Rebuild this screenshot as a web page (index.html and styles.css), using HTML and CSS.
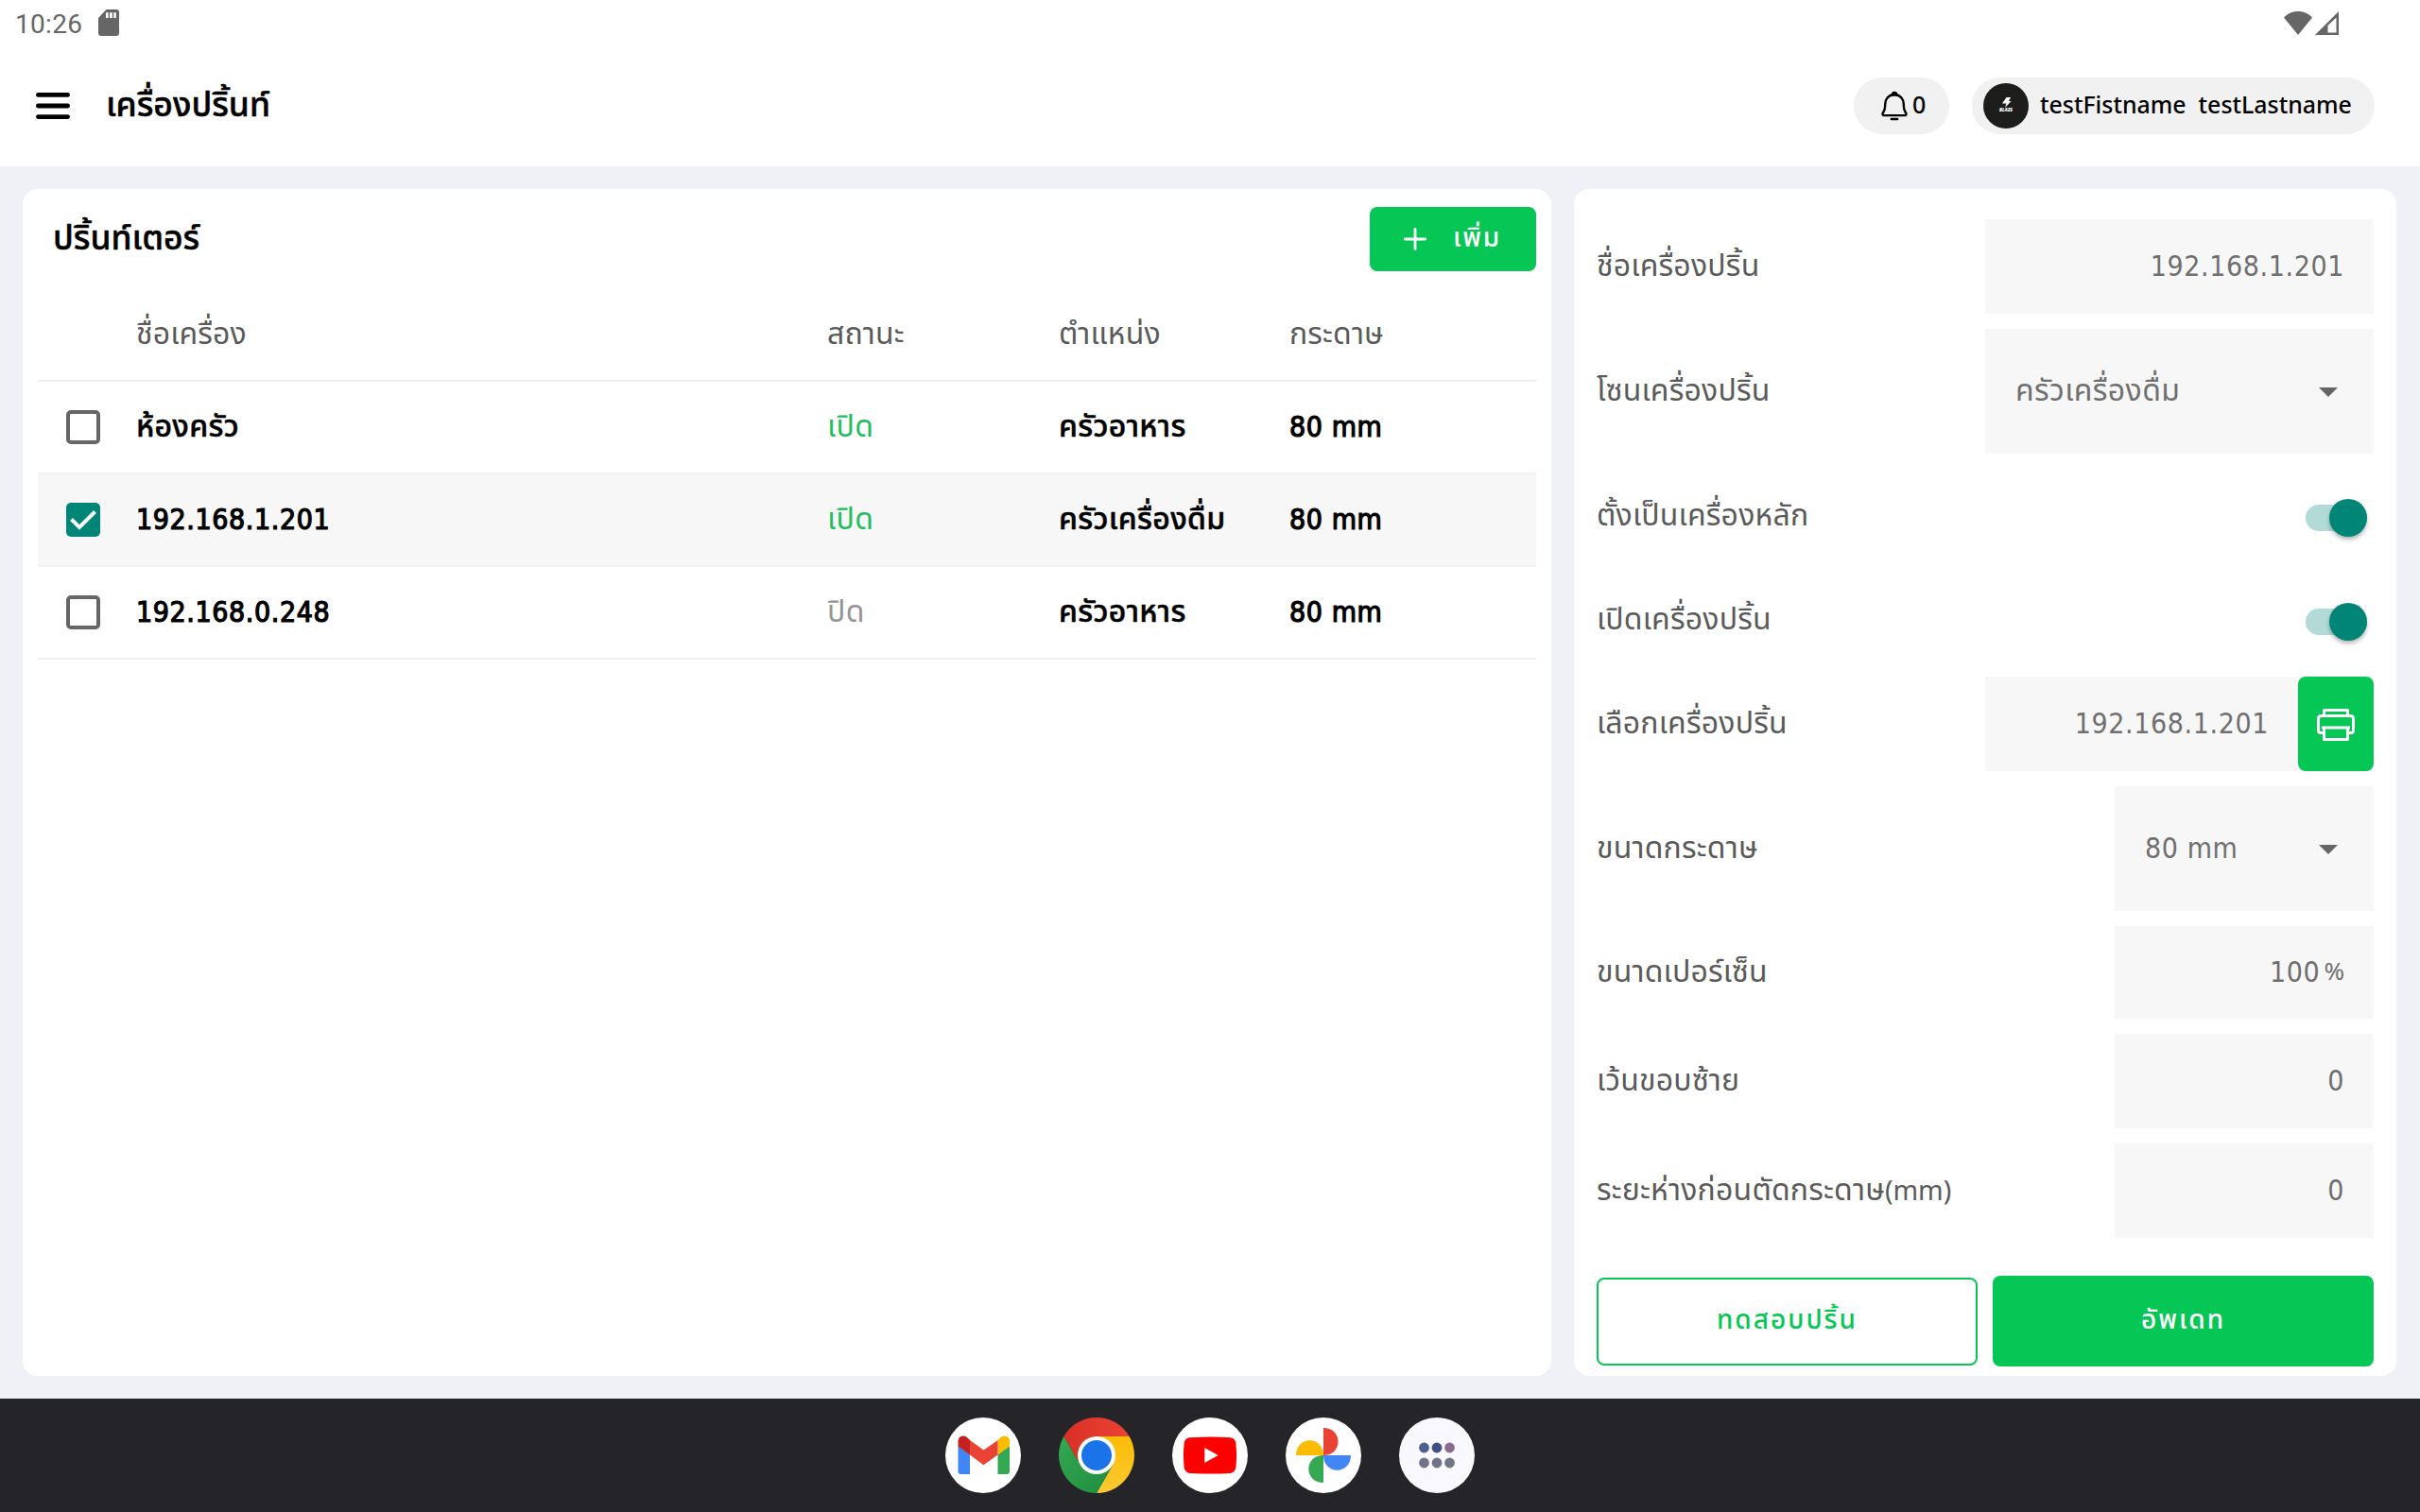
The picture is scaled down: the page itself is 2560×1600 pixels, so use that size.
FILE: index.html
```html
<!DOCTYPE html>
<html lang="th">
<head>
<meta charset="utf-8">
<title>เครื่องปริ้นท์</title>
<link rel="stylesheet" href="styles.css">
</head>
<body>
<div class="statusbar">
  <span class="clock">10:26</span>
  <svg class="sd" width="22" height="28" viewBox="0 0 22 28"><path fill="#666" fill-rule="evenodd" d="M8.5 0H19q3 0 3 3v22q0 3-3 3H3q-3 0-3-3V9zM8 3.3v5.7h2.6V3.3zM12 3.3v5.7h2.8V3.3zM16.2 3.3v5.7h2.6V3.3z"/></svg>
  <span class="spacer"></span>
  <svg width="30" height="25" viewBox="0 0 30 25"><path fill="#666" d="M0 6.5C8-2.2 22-2.2 30 6.5L15 25z"/></svg>
  <svg class="signal" width="25" height="25" viewBox="0 0 25 25"><path fill="#666" fill-rule="evenodd" d="M25 0v25H0zM22.5 6.5L13.5 15v7.5h9z"/></svg>
</div>
<header class="appbar">
  <svg class="menu" width="36" height="28" viewBox="0 0 36 28"><path stroke="#000" stroke-width="4.8" stroke-linecap="round" d="M2.4 2.4h31.2M2.4 14h31.2M2.4 25.6h31.2"/></svg>
  <h1>เครื่องปริ้นท์</h1>
  <span class="spacer"></span>
  <div class="pill bell">
    <svg width="28" height="32" viewBox="0 0 28 32" fill="none" stroke="#000" stroke-width="2.4" stroke-linecap="round" stroke-linejoin="round"><path d="M14 4.2c-6.300-.2-9.800 4.800-9.800 10 0 6.500-1.200 7.500-2.400 9.300-.7 1.600-.1 2.600 1.200 2.600h22c1.300 0 1.900-1 1.200-2.600-1.200-1.800-2.400-2.800-2.400-9.300 0-5.200-3.500-10.200-9.800-10z"/><path d="M11.700 4.300a2.300 2.300 0 0 1 4.600 0z" fill="#000"/><path d="M10.800 30h6.400"/></svg>
    <span>0</span>
  </div>
  <div class="pill user">
    <svg width="48" height="48" viewBox="0 0 48 48"><circle cx="24" cy="24" r="24" fill="#1d1d1b"/><path fill="#fff" d="M24.500 15h4.500l-2 4h2.500l-6.500 7 1.500-4.500H20z"/><text x="17" y="30" font-family="Noto Sans" font-size="4.600" font-weight="900" font-style="italic" fill="#fff" textLength="14" lengthAdjust="spacingAndGlyphs">BLAZE</text></svg>
    <span>testFistname&nbsp; testLastname</span>
  </div>
</header>
<main class="content">
  <section class="panel printers">
    <div class="panel-head">
      <h2>ปริ้นท์เตอร์</h2>
      <button class="btn add"><svg width="24" height="24" viewBox="0 0 24 24"><path stroke="#fff" stroke-width="2.800" stroke-linecap="round" d="M12 1.400v21.200M1.400 12h21.200"/></svg><span>เพิ่ม</span></button>
    </div>
    <div class="row th"><span></span><span>ชื่อเครื่อง</span><span>สถานะ</span><span>ตำแหน่ง</span><span>กระดาษ</span></div>
    <div class="row"><span class="check"></span><span>ห้องครัว</span><span class="on">เปิด</span><span>ครัวอาหาร</span><span class="num">80 mm</span></div>
    <div class="row selected"><span class="check checked"><svg width="36" height="36" viewBox="0 0 36 36"><path fill="none" stroke="#f7f7f7" stroke-width="4" d="M5.500 17.500l8.500 8.500L30.500 9.500"/></svg></span><span class="num">192.168.1.201</span><span class="on">เปิด</span><span>ครัวเครื่องดื่ม</span><span class="num">80 mm</span></div>
    <div class="row"><span class="check"></span><span class="num">192.168.0.248</span><span class="off">ปิด</span><span>ครัวอาหาร</span><span class="num">80 mm</span></div>
  </section>
  <section class="panel form">
    <div class="field"><label>ชื่อเครื่องปริ้น</label><div class="input wide">192.168.1.201</div></div>
    <div class="field"><label>โซนเครื่องปริ้น</label><div class="input select wide"><span class="thai">ครัวเครื่องดื่ม</span><i class="caret"></i></div></div>
    <div class="field toggle"><label>ตั้งเป็นเครื่องหลัก</label><div class="switch"><i></i></div></div>
    <div class="field toggle"><label>เปิดเครื่องปริ้น</label><div class="switch"><i></i></div></div>
    <div class="field"><label>เลือกเครื่องปริ้น</label><div class="combo"><div class="input">192.168.1.201</div><button class="btn print"><svg width="40" height="34" viewBox="0 0 40 34" fill="none" stroke="#fff" stroke-width="3" stroke-linejoin="round"><path d="M7.500 7.500v-6h25v6M8 25.500H4q-2.500 0-2.500-2.500V10.500q0-3 3-3h31q3 0 3 3V23q0 2.500-2.500 2.500h-4M5 20h30M7.500 20v12.500h25V20"/></svg></button></div></div>
    <div class="field"><label>ขนาดกระดาษ</label><div class="input select">80 mm<i class="caret"></i></div></div>
    <div class="field"><label>ขนาดเปอร์เซ็น</label><div class="input percent">100<span class="unit">%</span></div></div>
    <div class="field"><label>เว้นขอบซ้าย</label><div class="input">0</div></div>
    <div class="field"><label>ระยะห่างก่อนตัดกระดาษ<span class="mm">(mm)</span></label><div class="input">0</div></div>
    <div class="actions"><button class="btn outline">ทดสอบปริ้น</button><button class="btn fill">อัพเดท</button></div>
  </section>
</main>
<nav class="dock">
  <svg viewBox="0 0 80 80"><circle cx="40" cy="40" r="40" fill="#fff"/><path fill="#4285f4" d="M13.500 30v27a3 3 0 0 0 3 3H26V39z"/><path fill="#34a853" d="M68 30v27a3 3 0 0 1-3 3h-9.500V39z"/><path fill="#fbbc04" d="M55.500 24l2.500-2.500c4-4 10-1.500 10 3.500v5.500L55.500 39.500z"/><path fill="#c5221f" d="M26 24l-2.500-2.500c-4-4-10-1.500-10 3.500v5.500L26 39.500z"/><path fill="#ea4335" d="M26 24l14.500 10.500L55.500 24v15.500L40.500 50.200 26 39.500z"/></svg>
  <svg viewBox="0 0 80 80"><defs><linearGradient id="cr"><stop stop-color="#d93025"/><stop offset="1" stop-color="#ea4335"/></linearGradient><linearGradient id="cg" x1="1" y1="1" x2="0" y2="0"><stop stop-color="#1e8e3e"/><stop offset="1" stop-color="#34a853"/></linearGradient><linearGradient id="cy" x1="0" y1="1" x2="0" y2="0"><stop stop-color="#fcc934"/><stop offset="1" stop-color="#fbbc04"/></linearGradient></defs><path fill="url(#cr)" d="M5.360 20A40 40 0 0 1 74.640 20H40L22.700 50z"/><path fill="url(#cy)" d="M74.640 20A40 40 0 0 1 40 80L57.300 50 40 20z"/><path fill="url(#cg)" d="M40 80A40 40 0 0 1 5.360 20L22.700 50 57.300 50z"/><circle cx="40" cy="40" r="20" fill="#fff"/><circle cx="40" cy="40" r="16" fill="#1a73e8"/></svg>
  <svg viewBox="0 0 80 80"><circle cx="40" cy="40" r="40" fill="#fff"/><path fill="#f00" d="M18.500 21.300Q40 19.900 61.500 21.300 66.500 21.800 67.300 27 68.800 40 67.300 53 66.500 58.200 61.500 58.900 40 60.300 18.500 58.900 13.500 58.200 12.700 53 11.200 40 12.700 27 13.500 21.800 18.500 21.300z"/><path fill="#fff" d="M34.300 32v16L48.700 40z"/></svg>
  <svg viewBox="0 0 80 80"><circle cx="40" cy="40" r="40" fill="#fff"/><path fill="#ea4335" d="M40 11c9 0 15.500 6 15.500 14.500S49 40 40 40z"/><path fill="#4285f4" d="M69 40c0 9-6 15.700-14.500 15.700S40 49 40 40z"/><path fill="#34a853" d="M40 69c-9 0-15.700-6-15.700-14.500S31 40 40 40z"/><path fill="#fbbc04" d="M11 40c0-9 6-15.700 14.500-15.700S40 31 40 40z"/></svg>
  <svg viewBox="0 0 80 80"><circle cx="40" cy="40" r="40" fill="#faf8ff"/><g fill="#6f7587"><circle cx="26.500" cy="32" r="5.400" fill="#4c5f93"/><circle cx="40" cy="32" r="5.400" fill="#3f5184"/><circle cx="53.500" cy="32" r="5.400" fill="#8c6a8b"/><circle cx="26.500" cy="48" r="5.400"/><circle cx="40" cy="48" r="5.400"/><circle cx="53.500" cy="48" r="5.400"/></g></svg>
</nav>
</body>
</html>
```
FILE: styles.css
```css
* { box-sizing: border-box; }
body {
  margin: 0;
  width: 2560px;
  height: 1600px;
  display: flex;
  flex-direction: column;
  background: #f0f1f6;
  font-family: "Noto Sans Thai", "Noto Sans", sans-serif;
  font-size: 32px;
  line-height: 40px;
  color: #000;
  overflow: hidden;
}
svg { display: block; flex: none; }
h1, h2 { margin: 0; font-size: 35.5px; font-weight: 500; -webkit-text-stroke: .5px #000; padding-bottom: 1px; }
.spacer { flex: 1; }

.statusbar { height: 48px; background: #fff; display: flex; align-items: center; padding: 0 86px 0 16px; }
.clock { font-family: Roboto, sans-serif; font-size: 28px; letter-spacing: .3px; color: #666; padding-top: 4px; width: 88px; }
.signal { margin-left: 3px; }

.appbar { height: 128px; background: #fff; display: flex; align-items: center; padding: 0 48px 0 38px; }
.menu { margin-right: 38px; }
.pill { height: 60px; border-radius: 30px; background: #f1f1f1; display: flex; align-items: center; font: 500 25px/40px "Noto Sans", sans-serif; }
.bell { width: 101px; padding-left: 29px; gap: 5px; margin-right: 24px; }
.user { width: 426px; padding-left: 12px; gap: 12px; font-size: 24.900px; white-space: nowrap; }
.pill span { padding-bottom: 4px; }

.content { height: 1304px; display: flex; gap: 24px; padding: 24px 25px 24px 24px; }
.panel { background: #fff; border-radius: 16px; }
.printers { width: 1617px; padding: 19px 16px; }
.form { width: 870px; padding: 32px 24px 0 24px; display: flex; flex-direction: column; gap: 16px; }

.panel-head { display: flex; justify-content: space-between; align-items: center; height: 68px; padding-left: 16px; margin-bottom: 19px; }
.btn { border: 0; padding: 0; margin: 0; border-radius: 8px; background: #06c755; color: #fff; display: flex; align-items: center; justify-content: center; font: 500 28px/40px "Noto Sans Thai", sans-serif; letter-spacing: 2px; }
.add { width: 176px; height: 68px; gap: 28px; justify-content: flex-start; padding-left: 36px; }

.row { height: 98px; border-bottom: 2px solid #efefef; display: grid; grid-template-columns: 104px 731px 245px 244px 1fr; align-items: center; font-weight: 500; letter-spacing: .35px; }
.row.selected { background: #f7f7f7; }
.row > span { -webkit-text-stroke: .5px currentColor; }
.row.th > span { font-weight: 400; color: #5a5a5a; -webkit-text-stroke: 0; letter-spacing: .15px; }
.row > .on { color: #22bd5e; font-weight: 400; -webkit-text-stroke: 0; }
.row > .off { color: #959595; font-weight: 400; -webkit-text-stroke: 0; }
.row > .num { font-family: "DejaVu Sans Condensed", "DejaVu Sans", sans-serif; font-stretch: condensed; font-size: 30px; letter-spacing: .6px; font-weight: 400; -webkit-text-stroke: 1.200px #000; padding-bottom: 1px; }
.check { width: 36px; height: 36px; margin-left: 30px; border: 4px solid #666; border-radius: 5px; }
.check.checked { border: 0; background: #018577; }

.field { display: flex; justify-content: space-between; align-items: center; color: #5a5a5a; letter-spacing: .2px; }
.field label { padding-bottom: 1px; }
.input { width: 274px; height: 100px; background: #f7f7f7; color: #6f6f6f; display: flex; align-items: center; justify-content: flex-end; padding: 0 31px 1px; font-family: "DejaVu Sans Condensed", "DejaVu Sans", sans-serif; font-stretch: condensed; font-size: 30px; letter-spacing: .6px; }
.wide { width: 411px; }
.select { height: 132px; justify-content: space-between; padding: 0 38px 0 32px; }
.thai { font-family: "Noto Sans Thai", sans-serif; font-size: 32px; letter-spacing: .4px; }
.caret { border: 10px solid transparent; border-top-color: #666; border-bottom: 0; margin-top: 2px; }
.percent { height: 98px; }
.unit { font: 400 26px/40px "Noto Sans", sans-serif; letter-spacing: 0; margin-left: 4px; padding-bottom: 4px; }
.mm { font-family: "Noto Sans", sans-serif; font-size: 28.500px; letter-spacing: 0; }
.toggle { height: 94px; padding: 7px 7px 0 0; }
.switch { width: 65px; height: 28px; border-radius: 14px; background: #b2dad6; display: flex; align-items: center; justify-content: flex-end; margin-top: 3px; }
.switch i { width: 40px; height: 40px; border-radius: 50%; background: #018577; box-shadow: 0 3px 4px rgba(0, 0, 0, .28); }
.combo { display: flex; }
.combo .input { width: 331px; }
.print { width: 80px; height: 100px; }
.print svg { margin-top: 1px; }
.actions { display: grid; grid-template-columns: 1fr 1fr; gap: 16px; margin-top: 24px; align-items: center; }
.actions .btn { height: 96px; }
.actions .outline { height: 93px; background: #fff; border: 2px solid #06c755; color: #06c755; }

.dock { height: 120px; background: #242429; display: flex; justify-content: center; align-items: center; gap: 40px; }
.dock svg { width: 80px; height: 80px; }
```
